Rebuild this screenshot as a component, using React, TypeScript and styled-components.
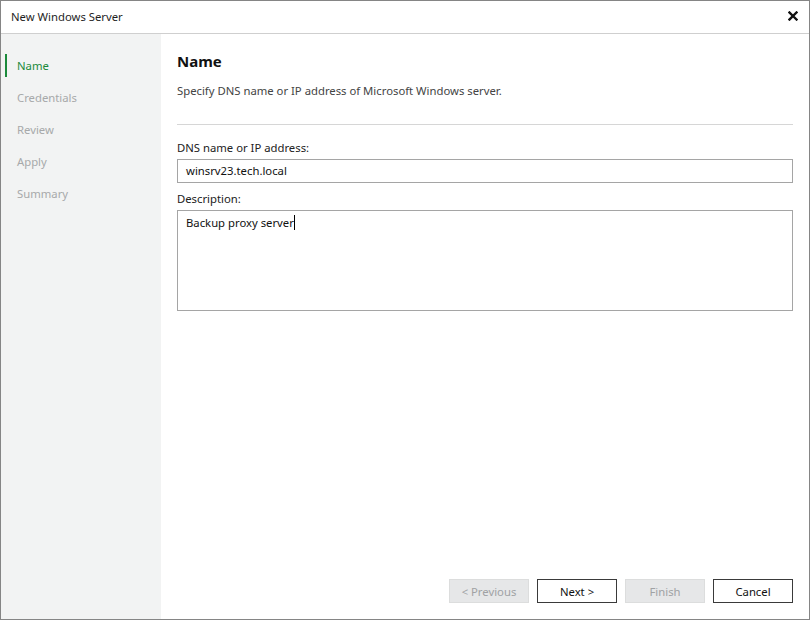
import React from 'react';
import styled, { createGlobalStyle } from 'styled-components';

const GlobalStyle = createGlobalStyle`
  html, body {
    margin: 0;
    padding: 0;
    background: #ffffff;
  }
  body {
    font-family: "Segoe UI", "Noto Sans", "Open Sans", sans-serif;
    font-size: 11.3px;
    color: #222;
  }
  * {
    box-sizing: border-box;
  }
`;

const Window = styled.div`
  width: 810px;
  height: 620px;
  border: 1px solid #858585;
  display: flex;
  flex-direction: column;
  background: #fff;
`;

const TitleBar = styled.div`
  height: 33px;
  flex: none;
  display: flex;
  align-items: center;
  justify-content: space-between;
  padding: 0 11px 0 10px;
  border-bottom: 1px solid #cfcfcf;
`;

const Title = styled.span`
  font-size: 11.3px;
  color: #1f1f1f;
  margin-top: -1px;
`;

const CloseButton = styled.button`
  border: 0;
  background: none;
  padding: 0;
  width: 10px;
  height: 10px;
  display: flex;
  cursor: pointer;
  margin-top: -3px;
`;

const Body = styled.div`
  flex: 1;
  display: flex;
  min-height: 0;
`;

const Sidebar = styled.nav`
  width: 160px;
  flex: none;
  background: #f2f3f3;
  padding-top: 15px;
  display: flex;
  flex-direction: column;
`;

const Step = styled.div<{ $active?: boolean }>`
  height: 32px;
  display: flex;
  align-items: center;
  position: relative;
  padding-left: 16px;
  font-size: 11.3px;
  color: ${p => (p.$active ? '#1b8a3b' : '#a7a9aa')};

  &::before {
    content: '';
    display: ${p => (p.$active ? 'block' : 'none')};
    position: absolute;
    left: 4px;
    top: 5px;
    width: 2px;
    height: 23px;
    background: #1b8a3b;
  }
`;

const Content = styled.main`
  flex: 1;
  display: flex;
  flex-direction: column;
  padding: 17px 16px 16px 16px;
`;

const Heading = styled.h1`
  margin: 0;
  font-size: 15px;
  line-height: 20px;
  font-weight: 700;
  color: #111;
`;

const Subtitle = styled.p`
  margin: 12px 0 0;
  font-size: 11.3px;
  line-height: 16px;
  color: #444;
`;

const Divider = styled.hr`
  margin: 25px 0 0;
  border: 0;
  border-top: 1px solid #d6d6d6;
  height: 0;
`;

const FieldLabel = styled.label<{ $top: number }>`
  display: block;
  margin-top: ${p => p.$top}px;
  font-size: 11.3px;
  line-height: 16px;
  color: #222;
`;

const TextBox = styled.div<{ $tall?: boolean }>`
  margin-top: 3px;
  height: ${p => (p.$tall ? '101px' : '24px')};
  border: 1px solid #a5a5a5;
  padding: ${p => (p.$tall ? '3px 8px' : '0 8px')};
  display: flex;
  align-items: ${p => (p.$tall ? 'flex-start' : 'center')};
  font-size: 11.3px;
  line-height: 18px;
  color: #111;
`;

const Caret = styled.span`
  display: inline-block;
  width: 1px;
  height: 15px;
  background: #000;
  vertical-align: -3px;
`;

const Footer = styled.div`
  margin-top: auto;
  display: flex;
  justify-content: flex-end;
  gap: 8px;
`;

const Button = styled.button<{ $disabled?: boolean }>`
  width: 80px;
  height: 24px;
  font-family: inherit;
  font-size: 11.3px;
  padding: 0;
  background: ${p => (p.$disabled ? '#e6e7e8' : '#fff')};
  color: ${p => (p.$disabled ? '#a0a2a4' : '#111')};
  border: 1px solid ${p => (p.$disabled ? '#dcdddd' : '#3a3a3a')};
  cursor: ${p => (p.$disabled ? 'default' : 'pointer')};
`;

const steps = ['Name', 'Credentials', 'Review', 'Apply', 'Summary'];

const App = (): JSX.Element => (
  <React.Fragment>
    <GlobalStyle />
    <Window>
      <TitleBar>
        <Title>New Windows Server</Title>
        <CloseButton aria-label="Close">
          <svg width="10" height="10" viewBox="0 0 10 10">
            <path d="M1.5 1.5 L8.5 8.5 M8.5 1.5 L1.5 8.5" stroke="#111" strokeWidth="2.4" strokeLinecap="square" />
          </svg>
        </CloseButton>
      </TitleBar>
      <Body>
        <Sidebar>
          {steps.map((step, i) => (
            <Step key={step} $active={i === 0}>
              {step}
            </Step>
          ))}
        </Sidebar>
        <Content>
          <Heading>Name</Heading>
          <Subtitle>Specify DNS name or IP address of Microsoft Windows server.</Subtitle>
          <Divider />
          <FieldLabel $top={15}>DNS name or IP address:</FieldLabel>
          <TextBox>winsrv23.tech.local</TextBox>
          <FieldLabel $top={8}>Description:</FieldLabel>
          <TextBox $tall>
            <span>
              Backup proxy server
              <Caret />
            </span>
          </TextBox>
          <Footer>
            <Button $disabled disabled>
              &lt; Previous
            </Button>
            <Button>Next &gt;</Button>
            <Button $disabled disabled>
              Finish
            </Button>
            <Button>Cancel</Button>
          </Footer>
        </Content>
      </Body>
    </Window>
  </React.Fragment>
);

export default App;
